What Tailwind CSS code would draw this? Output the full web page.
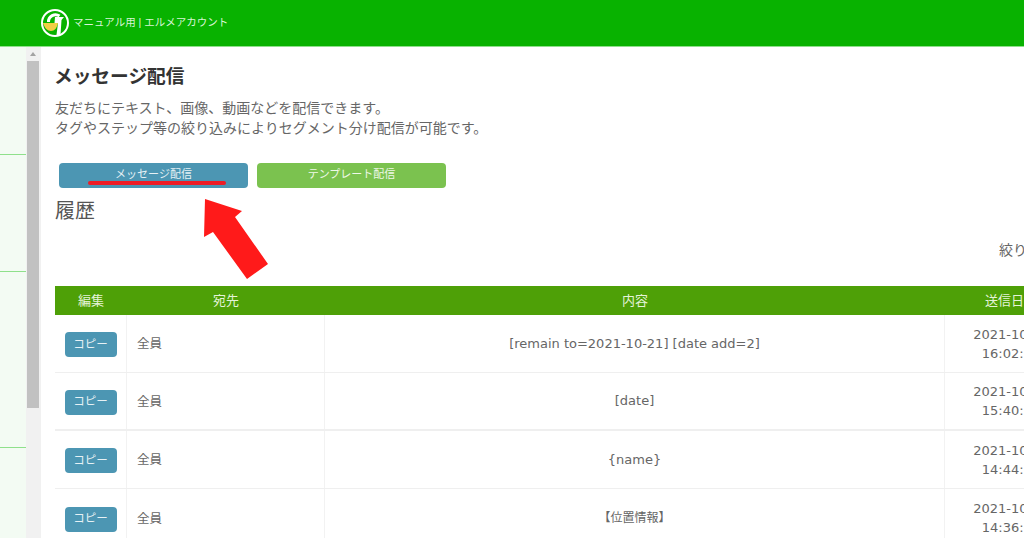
<!DOCTYPE html>
<html lang="ja">
<head>
    <meta charset="UTF-8">
    <title>メッセージ配信</title>
    <script src="https://cdn.jsdelivr.net/npm/@tailwindcss/browser@4"></script>
</head>
<body class="relative w-[1024px] h-[538px] overflow-hidden bg-white text-[#666] font-['Liberation_Sans','Noto_Sans_CJK_JP',sans-serif]">
    <!-- Header -->
    <header class="flex items-center h-[47px] pl-[41px] bg-[#08b200] border-b border-[#8fe08b]">
        <svg class="w-[28px] h-[28px]" viewBox="0 0 28 28">
            <circle cx="14" cy="14" r="13" fill="#08b200" stroke="#fff" stroke-width="2"/>
            <path d="M7.5 13a7 7 0 0 1 11-6" fill="none" stroke="#fff" stroke-width="3"/>
            <path d="M14 8h9l-2.500 3-1 15h-4l1.500-12h-3.500z" fill="#fff"/>
            <path d="M2 14h15c-1 5-3.500 8-7 8s-6.500-3-8-8z" fill="#f2cf45"/>
        </svg>
        <span class="ml-[4px] text-[10.5px] text-[#d8f5d6]">マニュアル用 | エルメアカウント</span>
    </header>

    <div class="flex h-[491px]">
        <!-- Sidebar -->
        <aside class="w-[26px] shrink-0 bg-[#f3fbf3] flex flex-col">
            <div class="h-[108px] border-b border-[#8fe08b]"></div>
            <div class="h-[117px] border-b border-[#8fe08b]"></div>
            <div class="h-[176px] border-b border-[#8fe08b]"></div>
        </aside>

        <!-- Scrollbar -->
        <div class="w-[15px] shrink-0 bg-[#f1f1f1] flex flex-col items-start pl-[1px]">
            <div class="h-[14px] w-[12px] flex items-center justify-center">
                <div class="w-0 h-0 border-x-[3px] border-x-transparent border-b-[4px] border-b-[#a3a3a3]"></div>
            </div>
            <div class="w-[12px] h-[347px] bg-[#c1c1c1]"></div>
        </div>

        <!-- Main -->
        <main class="flex-1 min-w-0 overflow-hidden pl-[14px]">
            <h1 class="mt-[18px] -ml-[1px] text-[18.7px] leading-[24px] font-bold text-[#333]">メッセージ配信</h1>
            <p class="mt-[9px] text-[14px] leading-[20px]">友だちにテキスト、画像、動画などを配信できます。<br>タグやステップ等の絞り込みによりセグメント分け配信が可能です。</p>
            <div class="flex gap-[9px] mt-[25px] ml-[4px]">
                <button class="w-[189px] h-[25px] pb-[3px] rounded-[4px] bg-[#4c96b3] text-[11px] text-[#e6f1f5]">メッセージ配信</button>
                <button class="w-[189px] h-[25px] pb-[3px] rounded-[4px] bg-[#7bc24f] text-[11px] text-[#eef8e8]">テンプレート配信</button>
            </div>
            <h2 class="mt-[9px] text-[20px] leading-[28px] text-[#555]">履歴</h2>
            <div class="mt-[15px] h-[20px] pl-[944px] text-[14px] leading-[20px] whitespace-nowrap">絞り込み</div>

            <!-- Table -->
            <div class="w-[1022px] mt-[26px] text-[12.5px] font-['DejaVu_Sans','Noto_Sans_CJK_JP',sans-serif]">
                <div class="grid grid-cols-[72px_198px_620px_132px] h-[29px] items-center text-center bg-[#4ea007] text-[#e4f3d8] text-[13px]">
                    <div>編集</div><div>宛先</div><div>内容</div><div>送信日時</div>
                </div>
                <div class="grid grid-cols-[72px_198px_620px_132px] h-[58px] border-b border-[#efefef]">
                    <div class="flex items-center justify-center pt-[2px] border-r border-[#f2f2f2]"><button class="w-[52px] h-[25px] rounded-[4px] bg-[#4c96b3] text-[#e6f1f5] text-[11.5px]">コピー</button></div>
                    <div class="flex items-center pl-[10px] pt-[2px] border-r border-[#f2f2f2]">全員</div>
                    <div class="flex items-center justify-center border-r border-[#f2f2f2] text-[13px]">[remain to=2021-10-21] [date add=2]</div>
                    <div class="flex items-center justify-center text-center text-[13px] leading-[19px]">2021-10-21<br>16:02:11</div>
                </div>
                <div class="grid grid-cols-[72px_198px_620px_132px] h-[58px] border-b-2 border-[#efefef]">
                    <div class="flex items-center justify-center pt-[2px] border-r border-[#f2f2f2]"><button class="w-[52px] h-[25px] rounded-[4px] bg-[#4c96b3] text-[#e6f1f5] text-[11.5px]">コピー</button></div>
                    <div class="flex items-center pl-[10px] pt-[2px] border-r border-[#f2f2f2]">全員</div>
                    <div class="flex items-center justify-center border-r border-[#f2f2f2] text-[13px]">[date]</div>
                    <div class="flex items-center justify-center text-center text-[13px] leading-[19px]">2021-10-21<br>15:40:25</div>
                </div>
                <div class="grid grid-cols-[72px_198px_620px_132px] h-[58px] border-b border-[#efefef]">
                    <div class="flex items-center justify-center pt-[2px] border-r border-[#f2f2f2]"><button class="w-[52px] h-[25px] rounded-[4px] bg-[#4c96b3] text-[#e6f1f5] text-[11.5px]">コピー</button></div>
                    <div class="flex items-center pl-[10px] pt-[2px] border-r border-[#f2f2f2]">全員</div>
                    <div class="flex items-center justify-center border-r border-[#f2f2f2] text-[13px]">{name}</div>
                    <div class="flex items-center justify-center text-center text-[13px] leading-[19px]">2021-10-21<br>14:44:36</div>
                </div>
                <div class="grid grid-cols-[72px_198px_620px_132px] h-[58px]">
                    <div class="flex items-center justify-center pt-[2px] border-r border-[#f2f2f2]"><button class="w-[52px] h-[25px] rounded-[4px] bg-[#4c96b3] text-[#e6f1f5] text-[11.5px]">コピー</button></div>
                    <div class="flex items-center pl-[10px] pt-[2px] border-r border-[#f2f2f2]">全員</div>
                    <div class="flex items-center justify-center border-r border-[#f2f2f2] text-[12px]">【位置情報】</div>
                    <div class="flex items-center justify-center text-center text-[13px] leading-[19px]">2021-10-21<br>14:36:02</div>
                </div>
            </div>
        </main>
    </div>

    <!-- Red annotations -->
    <div class="absolute left-[88px] top-[181px] w-[138px] h-[4px] rounded-full bg-[#ee1c25]"></div>
    <svg class="absolute left-0 top-0 pointer-events-none" width="1024" height="538">
        <polygon points="205,199 242,211 235,217 268,264 247,279 213,232 204,237" fill="#ff1a1a"/>
    </svg>
</body>
</html>
